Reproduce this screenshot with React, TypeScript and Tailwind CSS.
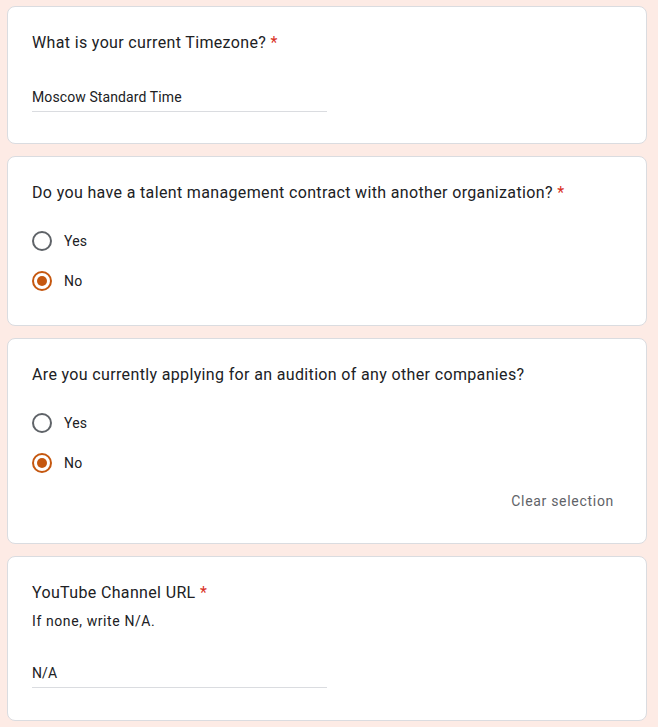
import React from 'react';

const font = { fontFamily: 'Roboto, "Noto Sans", Arial, sans-serif' };

function Title({ text, required }: { text: string; required?: boolean }) {
  return (
    <div className="text-[16px] leading-6 tracking-[0.35px] text-[#202124]">
      {text}
      {required && <span className="text-[#d93025]"> *</span>}
    </div>
  );
}

function TextAnswer({ value }: { value: string }) {
  return (
    <div className="mt-8 w-1/2 border-b border-[#dadce0] pb-1 text-[14px] leading-5 tracking-[0.1px] text-[#202124]">
      {value}
    </div>
  );
}

function Radio({ label, checked }: { label: string; checked?: boolean }) {
  return (
    <div className="flex h-10 items-center gap-3">
      <span
        className={
          checked
            ? 'flex h-5 w-5 items-center justify-center rounded-full border-2 border-[#c5570f]'
            : 'flex h-5 w-5 items-center justify-center rounded-full border-2 border-[#5f6368]'
        }
      >
        {checked && <span className="h-2.5 w-2.5 rounded-full bg-[#c5570f]" />}
      </span>
      <span className="text-[14px] leading-5 tracking-[0.2px] text-[#202124]">{label}</span>
    </div>
  );
}

function Card({ children }: { children: React.ReactNode }) {
  return (
    <div className="rounded-lg border border-[#dadce0] bg-white px-6 pt-6 pb-[31px]">
      {children}
    </div>
  );
}

export default function App() {
  return (
    <div className="min-h-screen bg-[#fdebe5] pt-[6px]" style={font}>
      <div className="ml-[7px] flex w-[640px] flex-col gap-3">
        {/* Timezone */}
        <Card>
          <Title text="What is your current Timezone?" required />
          <TextAnswer value="Moscow Standard Time" />
        </Card>

        {/* Talent contract */}
        <div className="rounded-lg border border-[#dadce0] bg-white px-6 pt-6 pb-6">
          <Title text="Do you have a talent management contract with another organization?" required />
          <div className="mt-4">
            <Radio label="Yes" />
            <Radio label="No" checked />
          </div>
        </div>

        {/* Audition */}
        <div className="rounded-lg border border-[#dadce0] bg-white px-6 pt-6 pb-6">
          <Title text="Are you currently applying for an audition of any other companies?" />
          <div className="mt-4">
            <Radio label="Yes" />
            <Radio label="No" checked />
          </div>
          <div className="flex justify-end">
            <button className="h-9 rounded px-2 text-[14px] font-normal tracking-[0.7px] text-[#5f6368]">
              Clear selection
            </button>
          </div>
        </div>

        {/* YouTube */}
        <div className="rounded-lg border border-[#dadce0] bg-white px-6 pt-6 pb-8">
          <Title text="YouTube Channel URL" required />
          <div className="mt-[6px] text-[14px] leading-5 tracking-[0.6px] text-[#202124]">If none, write N/A.</div>
          <TextAnswer value="N/A" />
        </div>
      </div>
    </div>
  );
}
